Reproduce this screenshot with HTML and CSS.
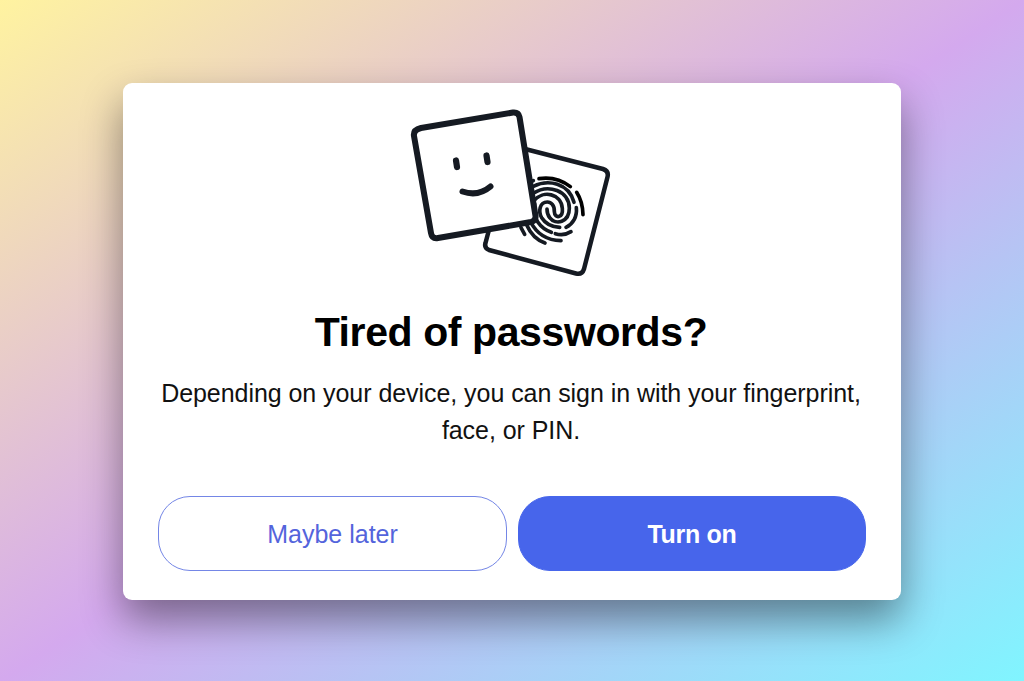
FILE: index.html
```html
<!DOCTYPE html>
<html lang="en">
<head>
<meta charset="utf-8">
<title>Tired of passwords?</title>
<link rel="stylesheet" href="styles.css">
</head>
<body>
<main class="card">
  <svg class="art" viewBox="0 0 220 185" fill="none" stroke="#151a22" stroke-linecap="round" stroke-linejoin="round">
    <path d="M98 42 L203 69 Q209 71 207.500 77 L184 169 Q182 175 176 173.500 L89 150 Q84 148 85.500 143 L110 50 Z" stroke-width="4.500"/>
    <g class="fingerprint" transform="translate(100 65) scale(.33333)" stroke-width="11">
      <path stroke="#000" d="M117 41 Q170 33 211 65 M230 82 Q248 110 249 149"/>
      <path d="M94 50 L100 47 M100 64 C145 42 206 54 222 112"/>
      <path d="M100 85 C145 56 208 77 208 130 C208 172 167 182 149 158 C143 150 141 142 141 132"/>
      <path d="M102 107 C130 74 184 86 187 130 C190 160 164 162 163 140 C164 121 153 111 142 111 C119 111 114 139 125 158 C137 177 158 186 179 187"/>
      <path d="M229 128 C232 155 219 177 198 187 M104 118 C94 159 122 190 154 202 M166 206 Q191 214 213 200"/>
      <path d="M92 171 C110 206 140 226 183 227 M80 180 C91 205 112 226 135 234 M63 188 L74 208"/>
    </g>
    <path d="M21 28 L113 12.500 Q118.500 12 119.500 17 L135.500 116 Q136 121 131 122 L38 138 Q32 139 31 133 L14 36 Q13 30 21 28 Z" fill="#fff" stroke-width="6"/>
    <path d="M56 60.500 L57 67 M86.500 55.500 L87.500 62" stroke-width="6.200"/>
    <path d="M62.500 91.500 Q78 97 90.500 86.500" stroke-width="6"/>
  </svg>
  <h1 class="title">Tired of passwords?</h1>
  <p class="description">Depending on your device, you can sign in with your fingerprint, face, or PIN.</p>
  <div class="actions">
    <button class="button" type="button">Maybe later</button>
    <button class="button button-primary" type="button">Turn on</button>
  </div>
</main>
</body>
</html>
```
FILE: styles.css
```css
* { box-sizing: border-box; }
body {
  margin: 0;
  height: 681px;
  padding: 83px 0 0 123px;
  overflow: hidden;
  font-family: "Liberation Sans", Arial, sans-serif;
  background: linear-gradient(to bottom right, #fff3a0 0%, #d4a9ee 50%, #80f5ff 100%);
}
.card {
  width: 778px;
  height: 517px;
  padding: 17px 35px 0;
  display: flex;
  flex-direction: column;
  align-items: center;
  border-radius: 9px;
  background: #fff;
  box-shadow: 0 20px 40px rgba(0, 0, 0, .42);
}
.art {
  width: 220px;
  height: 185px;
  flex: none;
  transform: translate(-2px, 0);
}
.title {
  margin: 23px 0 0;
  padding-right: 2px;
  font-size: 41px;
  line-height: 48px;
  font-weight: 700;
  letter-spacing: -.4px;
  color: #000;
}
.description {
  margin: 19px 0 0;
  padding-right: 2px;
  width: 714px;
  font-size: 25px;
  line-height: 37px;
  letter-spacing: -.055px;
  text-align: center;
  color: #111;
}
.actions {
  width: 708px;
  margin-top: 47px;
  display: grid;
  grid-template-columns: 349px 348px;
  gap: 11px;
}
.button {
  height: 75px;
  padding: 1px 0 0;
  border: 1px solid #7486e6;
  border-radius: 32px;
  background: #fff;
  color: #5464dc;
  font-family: inherit;
  font-size: 25px;
}
.button-primary {
  border-color: #4766eb;
  background: #4765eb;
  color: #fff;
  font-weight: 700;
  letter-spacing: -.3px;
}
```
